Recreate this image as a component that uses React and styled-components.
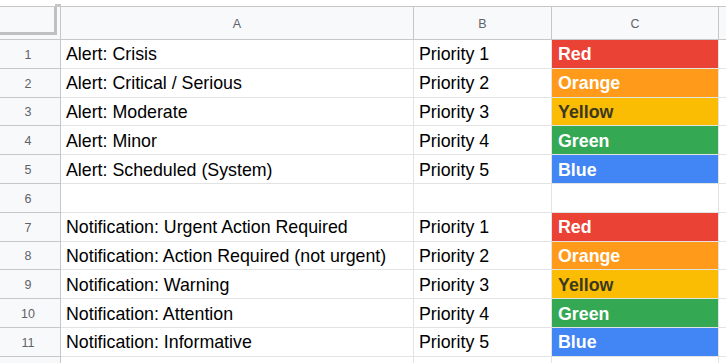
import React from "react";
import styled, { createGlobalStyle } from "styled-components";

const Global = createGlobalStyle`
  html, body { margin: 0; padding: 0; background: #ffffff; }
  body { font-family: "Liberation Sans", Arial, sans-serif; overflow: hidden; }
`;

const Page = styled.div`
  width: 726px;
  height: 363px;
  overflow: hidden;
  background: #fff;
`;

const TopStrip = styled.div`
  height: 7px;
  border-bottom: 1px solid #c7c7c7;
  box-sizing: border-box;
  display: grid;
  grid-template-columns: 55px 6px 1fr;
`;

const StripMark = styled.div`
  grid-column: 2;
  align-self: end;
  height: 2px;
  background: #c7c7c7;
`;

const Grid = styled.div`
  display: grid;
  grid-template-columns: 61px 353px 138px 167px 1fr;
  grid-template-rows: 33px;
  grid-auto-rows: 28.8px;
`;

const Cell = styled.div`
  box-sizing: border-box;
  border-right: 1px solid #e2e3e3;
  border-bottom: 1px solid #e2e3e3;
  display: flex;
  align-items: center;
  padding: 2px 5px 0;
  font-size: 17.8px;
  color: #000;
  white-space: nowrap;
  overflow: hidden;
  background: ${(p) => p.$bg || "#fff"};
  ${(p) =>
    p.$bg &&
    `
    font-weight: bold;
    color: ${p.$dark ? "#3b3a1e" : "#ffffff"};
    padding-left: 6px;
  `}
`;

const ColHead = styled.div`
  box-sizing: border-box;
  background: #f8f9fa;
  border-right: 1px solid #c7c7c7;
  border-bottom: 1px solid #c7c7c7;
  display: flex;
  align-items: center;
  justify-content: center;
  font-size: 12.5px;
  color: #5f6368;
  padding-top: 2px;
`;

const RowHead = styled.div`
  box-sizing: border-box;
  background: #f8f9fa;
  border-right: 1px solid #c7c7c7;
  border-bottom: 1px solid #c7c7c7;
  display: flex;
  align-items: center;
  justify-content: center;
  font-size: 12.5px;
  color: #5f6368;
  padding: 2px 4px 0 0;
`;

const Corner = styled.div`
  box-sizing: border-box;
  background: #f8f9fa;
  border-right: 1px solid #c7c7c7;
  border-bottom: 1px solid #c7c7c7;
  display: flex;
  align-items: flex-start;
`;

const CornerFreeze = styled.div`
  box-sizing: border-box;
  width: 57px;
  height: 28px;
  border-right: 3px solid #c0c0c0;
  border-bottom: 3px solid #c0c0c0;
`;

const COLORS = {
  Red: { bg: "#ea4335" },
  Orange: { bg: "#ff9a1a" },
  Yellow: { bg: "#fbbc04", dark: true },
  Green: { bg: "#34a853" },
  Blue: { bg: "#4285f4" },
};

const rows = [
  ["Alert: Crisis", "Priority 1", "Red"],
  ["Alert: Critical / Serious", "Priority 2", "Orange"],
  ["Alert: Moderate", "Priority 3", "Yellow"],
  ["Alert: Minor", "Priority 4", "Green"],
  ["Alert: Scheduled (System)", "Priority 5", "Blue"],
  ["", "", ""],
  ["Notification: Urgent Action Required", "Priority 1", "Red"],
  ["Notification: Action Required (not urgent)", "Priority 2", "Orange"],
  ["Notification: Warning", "Priority 3", "Yellow"],
  ["Notification: Attention", "Priority 4", "Green"],
  ["Notification: Informative", "Priority 5", "Blue"],
  ["", "", ""],
];

export default function App() {
  return (
    <Page>
      <Global />
      <TopStrip>
        <StripMark />
      </TopStrip>
      <Grid>
        <Corner>
          <CornerFreeze />
        </Corner>
        <ColHead>A</ColHead>
        <ColHead>B</ColHead>
        <ColHead>C</ColHead>
        <ColHead />
        {rows.map((r, i) => {
          const c = COLORS[r[2]];
          return (
            <React.Fragment key={i}>
              <RowHead>{i < 11 ? i + 1 : ""}</RowHead>
              <Cell>{r[0]}</Cell>
              <Cell>{r[1]}</Cell>
              <Cell $bg={c && c.bg} $dark={c && c.dark}>
                {r[2]}
              </Cell>
              <Cell />
            </React.Fragment>
          );
        })}
      </Grid>
    </Page>
  );
}
